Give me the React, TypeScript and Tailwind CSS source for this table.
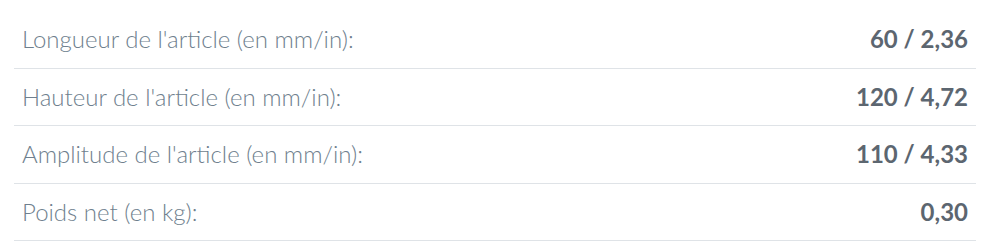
import React from 'react';

const rows = [
  { label: "Longueur de l'article (en mm/in):", value: '60 / 2,36' },
  { label: "Hauteur de l'article (en mm/in):", value: '120 / 4,72' },
  { label: "Amplitude de l'article (en mm/in):", value: '110 / 4,33' },
  { label: 'Poids net (en kg):', value: '0,30' },
];

export default function App() {
  return (
    <div className="w-[983px] h-[246px] bg-white pl-[14px] pr-[7px] pt-[11px] font-['Lato',sans-serif]">
      {rows.map((r) => (
        <div
          key={r.label}
          className="flex h-[57.5px] items-center justify-between border-b border-[#dfe3e7] px-2"
        >
          <span className="text-[24px] font-light text-[#6f7f8e]">{r.label}</span>
          <span className="text-[24px] font-bold text-[#5c6670]">{r.value}</span>
        </div>
      ))}
    </div>
  );
}
